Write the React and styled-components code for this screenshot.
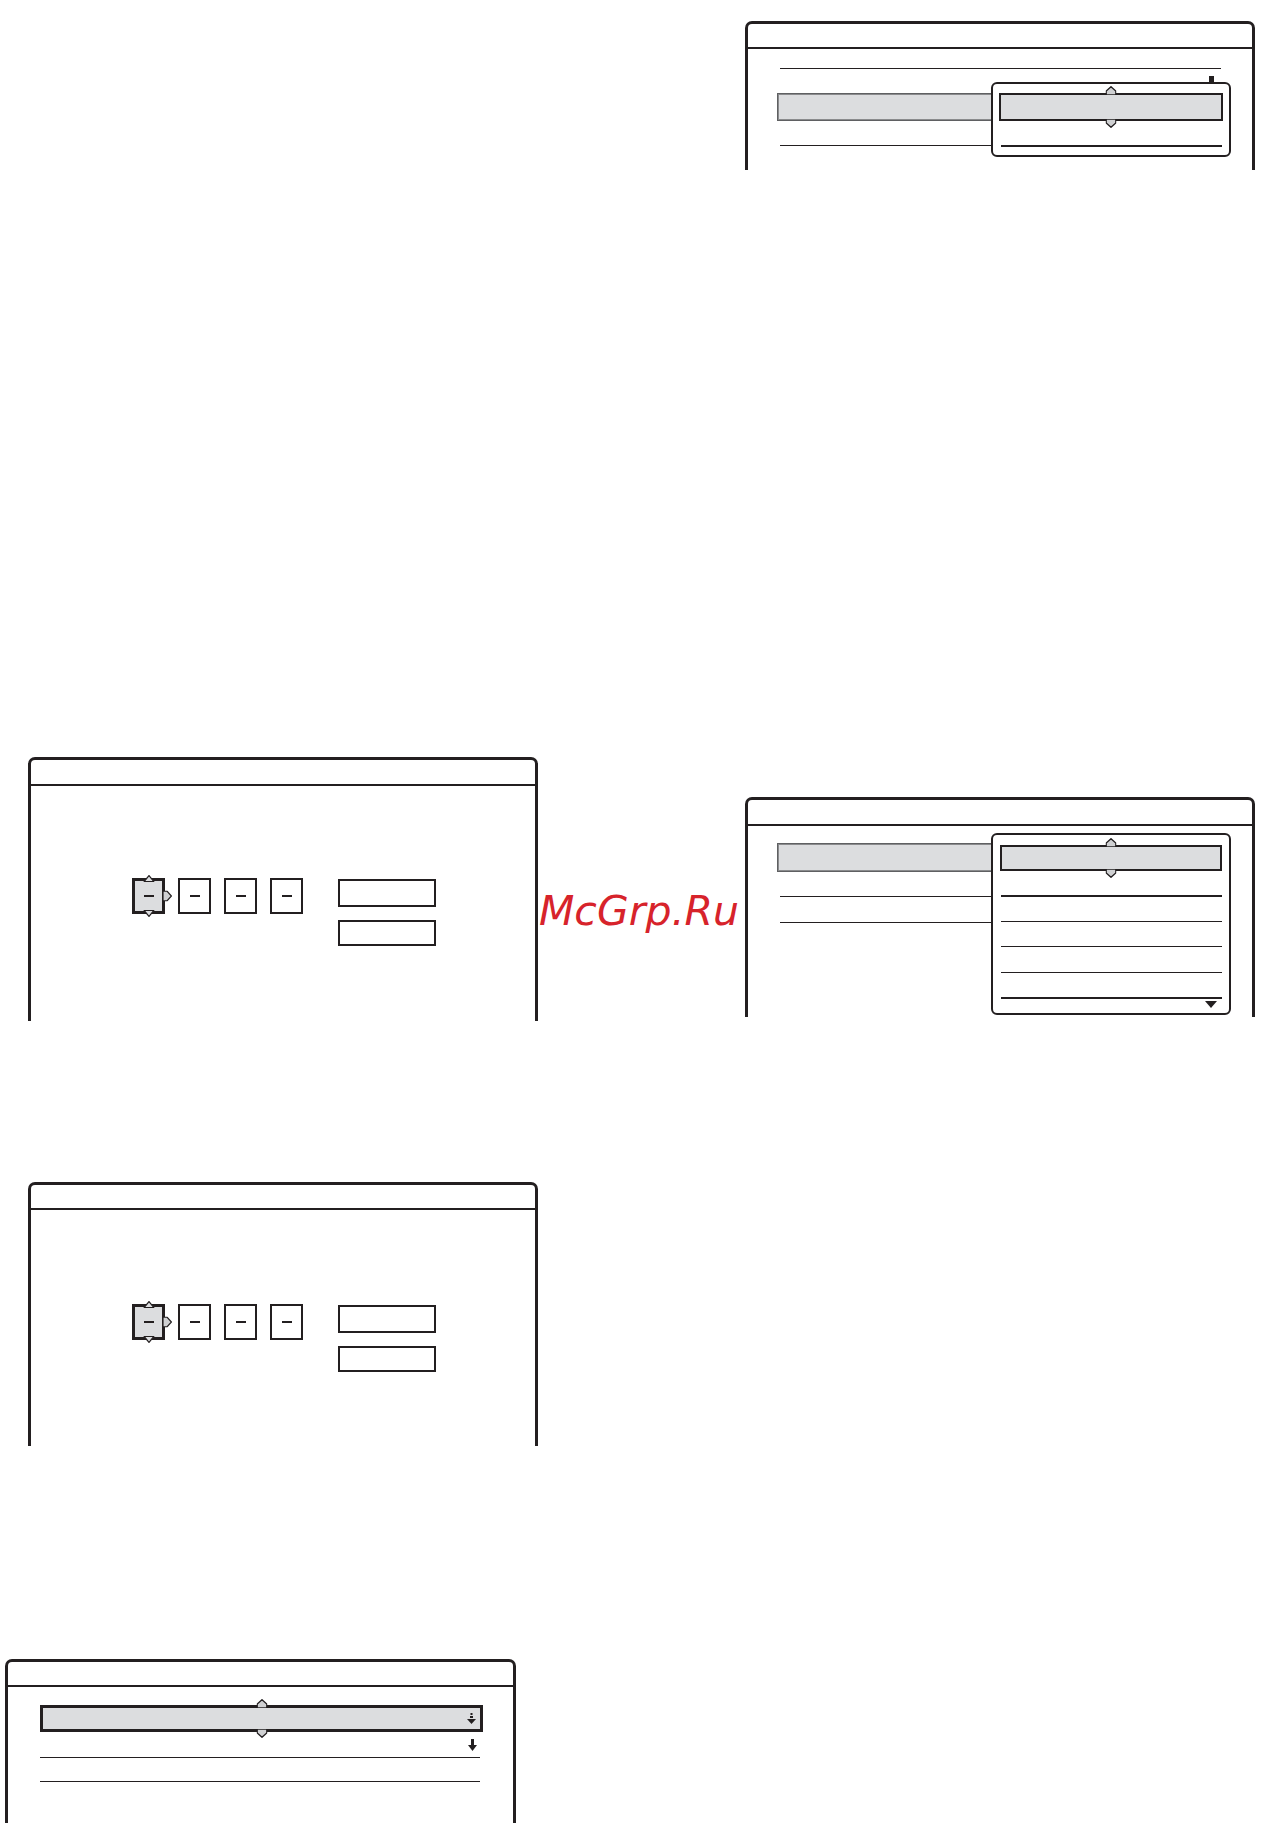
import React from "react";
import styled, { createGlobalStyle } from "styled-components";

const INK = "#231f20";
const FILL = "#dcdddf";

const GlobalStyle = createGlobalStyle`
  html, body {
    margin: 0;
    padding: 0;
    background: #fff;
    font-family: "DejaVu Sans", "Liberation Sans", sans-serif;
  }
`;

// little carets drawn on the highlighted fields
const UpCaret = ({ w = 11, h = 9 }) => (
  <svg width={w} height={h} viewBox="0 0 11 9">
    <polygon points="0.7,9 0.7,5 5.5,0.7 10.3,5 10.3,9" fill="#cfd0d2" stroke={INK} strokeWidth="1.3" />
  </svg>
);

const DownCaret = ({ w = 11, h = 9 }) => (
  <svg width={w} height={h} viewBox="0 0 11 9">
    <polygon points="0.7,0 0.7,4 5.5,8.3 10.3,4 10.3,0" fill="#cfd0d2" stroke={INK} strokeWidth="1.3" />
  </svg>
);

const TinyUp = () => (
  <svg width="11" height="7" viewBox="0 0 11 7">
    <polygon points="0.6,6.5 5.5,0.6 10.4,6.5" fill="#dedfe1" stroke={INK} strokeWidth="1.2" />
  </svg>
);

const TinyDown = () => (
  <svg width="11" height="7" viewBox="0 0 11 7">
    <polygon points="0.6,0.5 5.5,6.4 10.4,0.5" fill="#dedfe1" stroke={INK} strokeWidth="1.2" />
  </svg>
);

const RightCaret = () => (
  <svg width="9" height="11" viewBox="0 0 9 11">
    <polygon points="0,0.6 4,0.6 8.4,5.5 4,10.4 0,10.4" fill="#cfd0d2" stroke={INK} strokeWidth="1.2" />
  </svg>
);

const ScrollDown = () => (
  <svg width="12" height="7" viewBox="0 0 12 7">
    <polygon points="0,0 12,0 6,7" fill={INK} />
  </svg>
);

const SkipDotted = () => (
  <svg width="9" height="11" viewBox="0 0 9 11">
    <rect x="3.5" y="0" width="2" height="2" fill={INK} />
    <rect x="3" y="3" width="3" height="2" fill={INK} />
    <polygon points="0,6 9,6 4.5,11" fill={INK} />
  </svg>
);

const SkipSolid = () => (
  <svg width="9" height="12" viewBox="0 0 9 12">
    <rect x="3" y="0" width="3" height="6" fill={INK} />
    <polygon points="0,6 9,6 4.5,12" fill={INK} />
  </svg>
);

const Page = styled.div`
  display: flex;
  flex-direction: column;
  align-items: flex-start;
  width: 1264px;
  height: 1823px;
  overflow: hidden;
`;

const Row = styled.div`
  display: flex;
  align-items: flex-start;
  margin-top: ${(p) => p.$mt}px;
`;

const Frame = styled.section`
  position: relative;
  box-sizing: border-box;
  flex-shrink: 0;
  width: ${(p) => p.$w ?? 510}px;
  height: ${(p) => p.$h}px;
  margin-left: ${(p) => p.$x ?? 0}px;
  margin-top: ${(p) => p.$y ?? 0}px;
  border: 3px solid ${INK};
  border-bottom: none;
  border-radius: 7px 7px 0 0;
  background: #fff;
`;

const Header = styled.div`
  height: ${(p) => p.$h}px;
  border-bottom: 2px solid ${INK};
`;

const Body = styled.div`
  position: relative;
  display: flex;
  flex-direction: ${(p) => (p.$row ? "row" : "column")};
  align-items: flex-start;
  padding: ${(p) => p.$pt}px 0 0 ${(p) => p.$pl}px;
`;

const Rule = styled.div`
  width: ${(p) => p.$w}px;
  height: 0;
  margin-left: ${(p) => p.$ml ?? 0}px;
  margin-top: ${(p) => p.$mt ?? 0}px;
  border-top: ${(p) => p.$t ?? 1}px solid ${INK};
`;

const FieldBar = styled.div`
  box-sizing: border-box;
  width: ${(p) => p.$w}px;
  height: ${(p) => p.$h}px;
  margin-top: ${(p) => p.$mt ?? 0}px;
  background: ${FILL};
  border: 1px solid #5f6062;
  box-shadow: inset 0 0 0 1px #8a8b8d;
`;

const Popup = styled.div`
  position: absolute;
  left: 243px;
  top: ${(p) => p.$top}px;
  box-sizing: border-box;
  width: 240px;
  height: ${(p) => p.$h}px;
  display: flex;
  flex-direction: column;
  align-items: flex-start;
  padding-top: ${(p) => p.$pt}px;
  border: 2px solid ${INK};
  border-radius: 6px;
  background: #fff;
`;

const ScrollMark = styled.span`
  position: absolute;
  left: 216px;
  top: -8px;
  width: 5px;
  height: 6px;
  background: ${INK};
`;

const Selected = styled.div`
  position: relative;
  box-sizing: border-box;
  display: flex;
  align-items: center;
  justify-content: flex-end;
  width: ${(p) => p.$w}px;
  height: ${(p) => p.$h}px;
  margin-left: ${(p) => p.$ml ?? 0}px;
  padding-right: 4px;
  background: ${FILL};
  border: ${(p) => p.$b ?? 2}px solid ${INK};
`;

const CaretTop = styled.span`
  position: absolute;
  left: 50%;
  top: -${(p) => p.$off ?? 9}px;
  transform: translateX(-50%);
  display: flex;
`;

const CaretBottom = styled.span`
  position: absolute;
  left: 50%;
  bottom: -${(p) => p.$off ?? 9}px;
  transform: translateX(-50%);
  display: flex;
`;

const CaretRight = styled.span`
  position: absolute;
  right: -10px;
  top: 50%;
  transform: translateY(-50%);
  display: flex;
`;

const MenuRow = styled.div`
  display: flex;
  align-items: center;
  justify-content: flex-end;
  box-sizing: border-box;
  width: ${(p) => p.$w ?? 221}px;
  height: ${(p) => p.$h}px;
  margin-left: ${(p) => p.$ml ?? 8}px;
  padding-right: ${(p) => p.$pr ?? 0}px;
  border-bottom: ${(p) => p.$b ?? 1}px solid ${INK};
`;

const ScrollRow = styled.div`
  display: flex;
  justify-content: flex-end;
  width: 221px;
  margin-left: 8px;
  margin-top: 2px;
  padding-right: 5px;
  box-sizing: border-box;
`;

const Digits = styled.div`
  display: flex;
  gap: 13px;
`;

const DigitBox = styled.div`
  position: relative;
  box-sizing: border-box;
  display: flex;
  align-items: center;
  justify-content: center;
  width: 33px;
  height: 36px;
  border: ${(p) => (p.$active ? 3 : 2)}px solid ${INK};
  background: ${(p) => (p.$active ? FILL : "#fff")};

  &::after {
    content: "";
    width: 10px;
    height: 2px;
    background: ${INK};
  }
`;

const Slots = styled.div`
  display: flex;
  flex-direction: column;
  gap: 13px;
  margin-left: 35px;
  margin-top: 1px;
`;

const Slot = styled.div`
  box-sizing: border-box;
  width: 98px;
  height: ${(p) => p.$h}px;
  border: 2px solid ${INK};
`;

const Stamp = styled.div`
  flex-shrink: 0;
  box-sizing: border-box;
  width: 207px;
  margin-top: 131px;
  padding-left: 1px;
  font-family: "DejaVu Sans", "Liberation Sans", sans-serif;
  font-style: italic;
  font-size: 41px;
  line-height: 46px;
  color: #d7232b;
  white-space: nowrap;
`;

const DigitPanel = ({ y, x, headerH, pt }) => (
  <Frame $x={x} $y={y} $h={264}>
    <Header $h={headerH} />
    <Body $row $pt={pt} $pl={101}>
      <Digits>
        <DigitBox $active>
          <CaretTop $off={6}>
            <TinyUp />
          </CaretTop>
          <CaretBottom $off={6}>
            <TinyDown />
          </CaretBottom>
          <CaretRight>
            <RightCaret />
          </CaretRight>
        </DigitBox>
        <DigitBox />
        <DigitBox />
        <DigitBox />
      </Digits>
      <Slots>
        <Slot $h={28} />
        <Slot $h={26} />
      </Slots>
    </Body>
  </Frame>
);

const menuRows = [
  { h: 26, b: 2 },
  { h: 25, b: 1 },
  { h: 25, b: 1 },
  { h: 26, b: 1 },
  { h: 26, b: 2 },
];

export default function App() {
  return (
    <>
      <GlobalStyle />
      <Page>
        <Frame $x={745} $y={21} $h={149}>
          <Header $h={23} />
          <Body $pt={19} $pl={29}>
            <Rule $w={441} $ml={3} />
            <FieldBar $w={216} $h={28} $mt={24} />
            <Rule $w={211} $ml={3} $mt={24} />
            <Popup $top={33} $h={75} $pt={9}>
              <ScrollMark />
              <Selected $w={224} $h={28} $ml={6}>
                <CaretTop>
                  <UpCaret />
                </CaretTop>
                <CaretBottom>
                  <DownCaret />
                </CaretBottom>
              </Selected>
              <Rule $w={221} $ml={8} $mt={24} $t={2} />
            </Popup>
          </Body>
        </Frame>

        <Row $mt={587}>
          <DigitPanel x={28} y={0} headerH={24} pt={92} />
          <Stamp>McGrp.Ru</Stamp>
          <Frame $y={40} $h={220}>
            <Header $h={24} />
            <Body $pt={17} $pl={29}>
              <FieldBar $w={216} $h={29} />
              <Rule $w={211} $ml={3} $mt={24} />
              <Rule $w={211} $ml={3} $mt={25} />
              <Popup $top={7} $h={182} $pt={10}>
                <Selected $w={222} $h={26} $ml={7}>
                  <CaretTop>
                    <UpCaret />
                  </CaretTop>
                  <CaretBottom>
                    <DownCaret />
                  </CaretBottom>
                </Selected>
                {menuRows.map((r, i) => (
                  <MenuRow key={i} $h={r.h} $b={r.b} />
                ))}
                <ScrollRow>
                  <ScrollDown />
                </ScrollRow>
              </Popup>
            </Body>
          </Frame>
        </Row>

        <DigitPanel x={28} y={161} headerH={23} pt={94} />

        <Frame $x={5} $y={213} $w={511} $h={164}>
          <Header $h={23} />
          <Body $pt={18} $pl={32}>
            <Selected $w={443} $h={27} $b={3}>
              <CaretTop>
                <UpCaret />
              </CaretTop>
              <CaretBottom>
                <DownCaret />
              </CaretBottom>
              <SkipDotted />
            </Selected>
            <MenuRow $w={440} $ml={0} $h={26} $pr={3}>
              <SkipSolid />
            </MenuRow>
            <MenuRow $w={440} $ml={0} $h={24} />
          </Body>
        </Frame>
      </Page>
    </>
  );
}
